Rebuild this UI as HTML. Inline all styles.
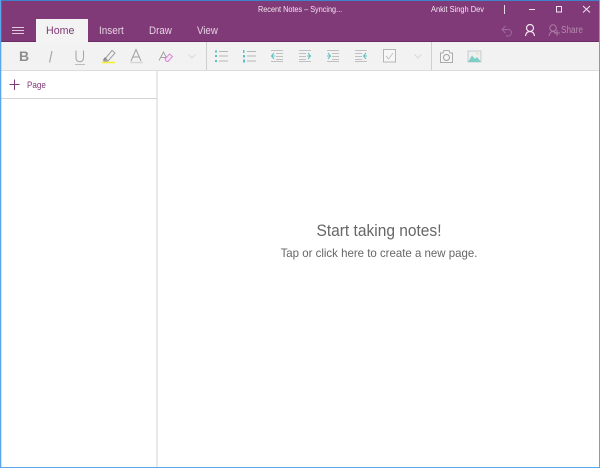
<!DOCTYPE html>
<html>
<head>
<meta charset="utf-8">
<style>
html,body{margin:0;padding:0;width:600px;height:468px;overflow:hidden;background:#fff}
*{box-sizing:border-box}
body{position:relative;font-family:"Liberation Sans",sans-serif}
.a{position:absolute}
.t{position:absolute;white-space:nowrap;line-height:1;transform-origin:left top}
.c{transform-origin:center top;text-align:center;left:158px;width:442px}
</style>
</head>
<body>
<div class="a" style="left:0;top:0;width:600px;height:42px;background:#803a78"></div>
<div class="a" style="left:36px;top:19px;width:52px;height:23px;background:#f3f3f3"></div>
<div class="a" style="left:0;top:42px;width:600px;height:28px;background:#f2f2f2"></div>
<div class="a" style="left:0;top:70px;width:600px;height:1px;background:#dcdcdc"></div>
<div class="a" style="left:36px;top:41px;width:52px;height:2px;background:#f3f3f3"></div>
<div class="a" style="left:0;top:41px;width:36px;height:1px;background:#6d2a66"></div>
<div class="a" style="left:88px;top:41px;width:512px;height:1px;background:#6d2a66"></div>
<div class="a" style="left:206px;top:42px;width:1px;height:28px;background:#cfcfcf"></div>
<div class="a" style="left:431px;top:42px;width:1px;height:28px;background:#cfcfcf"></div>
<div class="a" style="left:156px;top:71px;width:2px;height:397px;background:#e9e9e9"></div>
<div class="a" style="left:1px;top:98px;width:156px;height:1px;background:#d4d4d4"></div>

<div class="t" style="left:258px;top:6px;font-size:8px;color:#f3e6f1;transform:scaleX(.91)">Recent Notes – Syncing...</div>
<div class="t" style="left:431px;top:6px;font-size:8px;color:#f3e6f1;transform:scaleX(.93)">Ankit Singh Dev</div>
<div class="t" style="left:46px;top:26px;font-size:11px;color:#803a78;transform:scaleX(.97)">Home</div>
<div class="t" style="left:99px;top:26px;font-size:11px;color:#e6d3e3;transform:scaleX(.9)">Insert</div>
<div class="t" style="left:149px;top:26px;font-size:11px;color:#e6d3e3;transform:scaleX(.89)">Draw</div>
<div class="t" style="left:197px;top:26px;font-size:11px;color:#e6d3e3;transform:scaleX(.88)">View</div>
<div class="t" style="left:561px;top:26px;font-size:10px;color:#b48cb0;transform:scaleX(.82)">Share</div>
<div class="t" style="left:27px;top:81px;font-size:9px;color:#803a78;transform:scaleX(.9)">Page</div>
<div class="t c" style="top:223px;font-size:16.5px;color:#666;transform:scaleX(.94)">Start taking notes!</div>
<div class="t c" style="top:247px;font-size:12px;color:#666;transform:scaleX(.955)">Tap or click here to create a new page.</div>

<svg class="a" style="left:0;top:0" width="600" height="468" viewBox="0 0 600 468" fill="none">
<!-- hamburger -->
<path d="M12 27.500H24M12 30.500H24M12 33.500H24" stroke="#e0cbdd" stroke-width="1"/>
<!-- title bar buttons -->
<path d="M504.500 5V14" stroke="#e8d8e6"/>
<path d="M529 9.500H535" stroke="#f3e6f1"/>
<rect x="556.500" y="6.500" width="5" height="5.500" stroke="#f3e6f1"/>
<path d="M583 6L590 12.500M590 6L583 12.500" stroke="#f3e6f1"/>
<!-- undo -->
<path d="M505.500 26L502 29.500L505.500 33M502 29.500H508C512.500 29.500 512.500 36 508 36H506" stroke="#9f6a99" stroke-width="1"/>
<!-- user -->
<circle cx="530" cy="28" r="3.500" stroke="#f3e6f1" stroke-width="1.200"/>
<path d="M525.500 36C526 32.500 528 31.500 530 31.500C532 31.500 534 32.500 534.500 36" stroke="#f3e6f1" stroke-width="1.200"/>
<!-- share -->
<circle cx="553" cy="28" r="3.200" stroke="#aa7ba5"/>
<path d="M549 36C549.500 33 551 31.500 553 31.500C554 31.500 555 32 556 33M554 33H560M557 36V30" stroke="#aa7ba5"/>
<!-- plus -->
<path d="M14.500 79.500V90M9.500 84.500H19.500" stroke="#803a78"/>
<!-- italic underline etc -->
<path d="M52 51L49.500 62.500" stroke="#a8a8a8" stroke-width="1.200"/>
<path d="M76 50.500V58C76 63 83.500 63 83.500 58V50.500" stroke="#a8a8a8" stroke-width="1.100"/>
<path d="M75 64.500H85" stroke="#bcbcbc"/>
<!-- highlighter -->
<path d="M105 59L112 50.500L115 53L108 61L104 61.500Z" stroke="#9f9f9f" fill="#f2f2f2"/>
<path d="M102.500 60.500L105 57L108 60.500Z" fill="#8a8a8a"/>
<path d="M102 62.500H115" stroke="#f5ee3c" stroke-width="1.600"/>
<!-- font color -->
<path d="M131 61L136 49.500L141 61M133 57H139.500" stroke="#a0a0a0" stroke-width="1"/>
<path d="M130 62.500H143" stroke="#d6d6d6" stroke-width="1.500"/>
<!-- clear formatting -->
<path d="M159 60.500L163.500 52L167 59M161 57.500H165.500" stroke="#a0a0a0" stroke-width=".9"/>
<path d="M165 59L169.500 54L172.500 56.500L168 61.500L166.500 61.500Z" stroke="#d98ad0" fill="#f7e4f5"/>
<!-- chevrons -->
<path d="M188.500 54.500L192 58L195.500 54.500" stroke="#d8d8d8"/>
<path d="M414.500 54.500L418 58L421.500 54.500" stroke="#d8d8d8"/>
<!-- bullets -->
<g fill="#5cc2bf">
<rect x="215" y="50.500" width="2" height="2"/>
<rect x="215" y="55" width="2" height="2"/>
<rect x="215" y="60" width="2" height="2"/>
<rect x="243" y="50" width="1.500" height="3"/>
<rect x="243" y="55" width="2" height="2.500"/>
<rect x="243" y="59.500" width="2" height="3"/>
</g>
<path d="M219 51.500H228M219 56H228M219 61H228M247 51.500H256M247 56H256M247 61H256" stroke="#b5b5b5" stroke-width="1.100"/>
<!-- indents -->
<path d="M271 50.500H283M276 53.500H283M276 56.500H283M276 59.500H283M271 61.500H283" stroke="#c0c0c0" stroke-width="1"/>
<path d="M274 53L271.500 56L274 59M272 56H275" stroke="#5cc2bf"/>
<path d="M299 50.500H311M299 53.500H306M299 56.500H306M299 59.500H306M299 61.500H311" stroke="#c0c0c0" stroke-width="1"/>
<path d="M308 53L310.500 56L308 59M307 56H310" stroke="#5cc2bf"/>
<path d="M327 50.500H339M332 53.500H339M332 56.500H339M332 59.500H339M327 61.500H339" stroke="#c0c0c0" stroke-width="1"/>
<path d="M328 53L330.500 56L328 59M327 56H330" stroke="#5cc2bf"/>
<path d="M355 50.500H367M355 53.500H362M355 56.500H362M355 59.500H362M355 61.500H367" stroke="#c0c0c0" stroke-width="1"/>
<path d="M366 53L363.500 56L366 59M364 56H367" stroke="#5cc2bf"/>
<!-- checkbox -->
<rect x="383.500" y="49.500" width="12" height="12.500" stroke="#b5b5b5" fill="#f7f7f7"/>
<path d="M386 56L388.500 59L393 53" stroke="#c4c4c4"/>
<!-- camera -->
<path d="M440.500 53H443L444 50.500H449L450 53H452.500V62.500H440.500Z" stroke="#ababab" fill="#f5f5f5"/>
<circle cx="446.500" cy="57.500" r="3" stroke="#9f9f9f"/>
<!-- image -->
<rect x="468" y="51" width="13" height="11" fill="#eef0ef" stroke="#b8c4c4" stroke-width=".8"/>
<path d="M468 62L472 55.500L475 59L477 57L481 62Z" fill="#7fcdc9"/>
<circle cx="477.500" cy="53.500" r="1" fill="#f0d9a0"/>
<!-- window border -->
<path d="M0 .5H600" stroke="#3f82c9"/>
<path d="M.65 0V468" stroke="#5ba6e8" stroke-width="1.300"/>
<path d="M599.500 0V468M0 467.500H600" stroke="#5ba6e8"/>
</svg>

<div class="t" style="left:19px;top:49px;font-size:14px;font-weight:bold;color:#8e8e8e">B</div>
</body>
</html>
